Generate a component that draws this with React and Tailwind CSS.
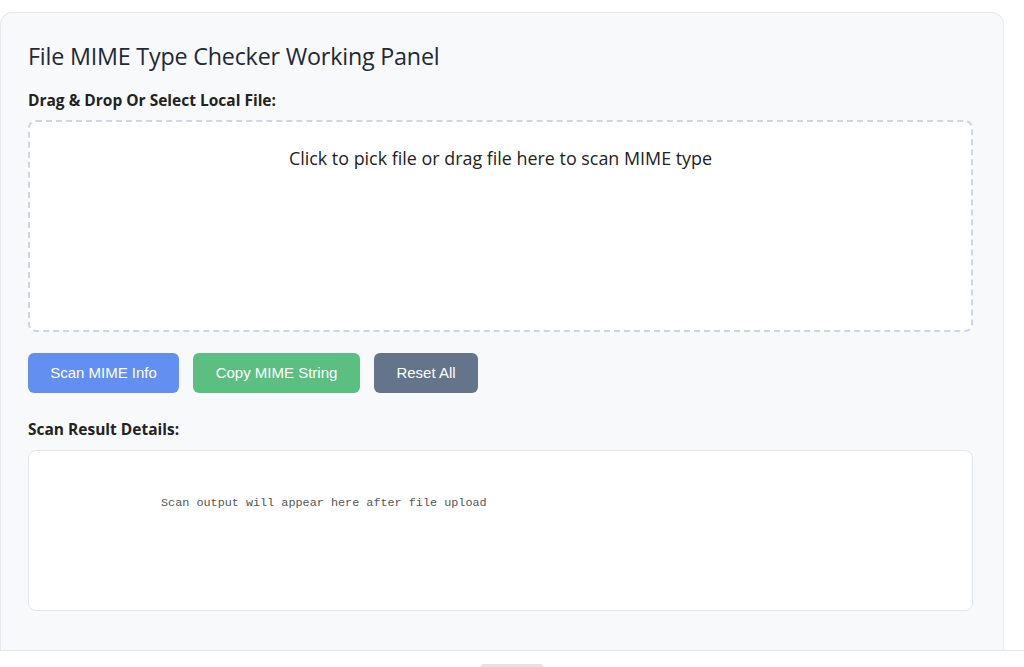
import React, { useRef, useState } from 'react'

const App = () => {
  const inputRef = useRef(null)
  const [result, setResult] = useState('')

  return (
    <div className="w-[1024px] h-[667px] bg-white overflow-hidden" style={{ fontFamily: '"Open Sans", "Noto Sans", sans-serif' }}>
      {/* Scroll area */}
      <div className="h-[651px] overflow-hidden border-b border-[#e4e6ea] pt-3">
        <div className="w-[1004px] min-h-[660px] bg-[#f8f9fb] border border-[#e6e8ec] rounded-xl pl-[27px] pr-[30px] pt-[27px]">
          <h1 className="text-[23.3px] leading-8 text-[#1f2937] tracking-[-0.2px]">File MIME Type Checker Working Panel</h1>

          <label className="block mt-[18px] text-[15.5px] font-bold text-[#222] leading-5">Drag &amp; Drop Or Select Local File:</label>
          <div
            onClick={() => inputRef.current?.click()}
            className="mt-[10px] h-[212px] bg-white border-2 border-dashed border-[#cdd6e1] rounded-lg flex justify-center pt-[24px] cursor-pointer"
          >
            <span className="text-[17.9px] text-[#222] leading-6">Click to pick file or drag file here to scan MIME type</span>
            <input ref={inputRef} type="file" className="hidden" />
          </div>

          <div className="mt-[21px] flex gap-[14px]" style={{ fontFamily: '"Liberation Sans", Arial, sans-serif' }}>
            <button className="h-10 w-[151px] rounded-md bg-[#6390f0] text-white text-[15px]">Scan MIME Info</button>
            <button className="h-10 w-[167px] rounded-md bg-[#5abf80] text-white text-[15px]">Copy MIME String</button>
            <button onClick={() => setResult('')} className="h-10 w-[104px] rounded-md bg-[#64748b] text-white text-[15px]">Reset All</button>
          </div>

          <label className="block mt-[26px] text-[15.5px] font-bold text-[#222] leading-5">Scan Result Details:</label>
          <div className="mt-[11px] h-[161px] bg-white border border-[#e2e6ec] rounded-lg">
            <pre className="pl-[132px] pt-[44px] text-[11.8px] text-[#555] leading-4" style={{ fontFamily: '"Liberation Mono", "Courier New", monospace' }}>
              {result || 'Scan output will appear here after file upload'}
            </pre>
          </div>
        </div>
      </div>
      <div className="flex justify-center pt-[13px]">
        <div className="w-16 h-1 bg-[#e3e3e3] rounded-t"></div>
      </div>
    </div>
  )
}

export default App
